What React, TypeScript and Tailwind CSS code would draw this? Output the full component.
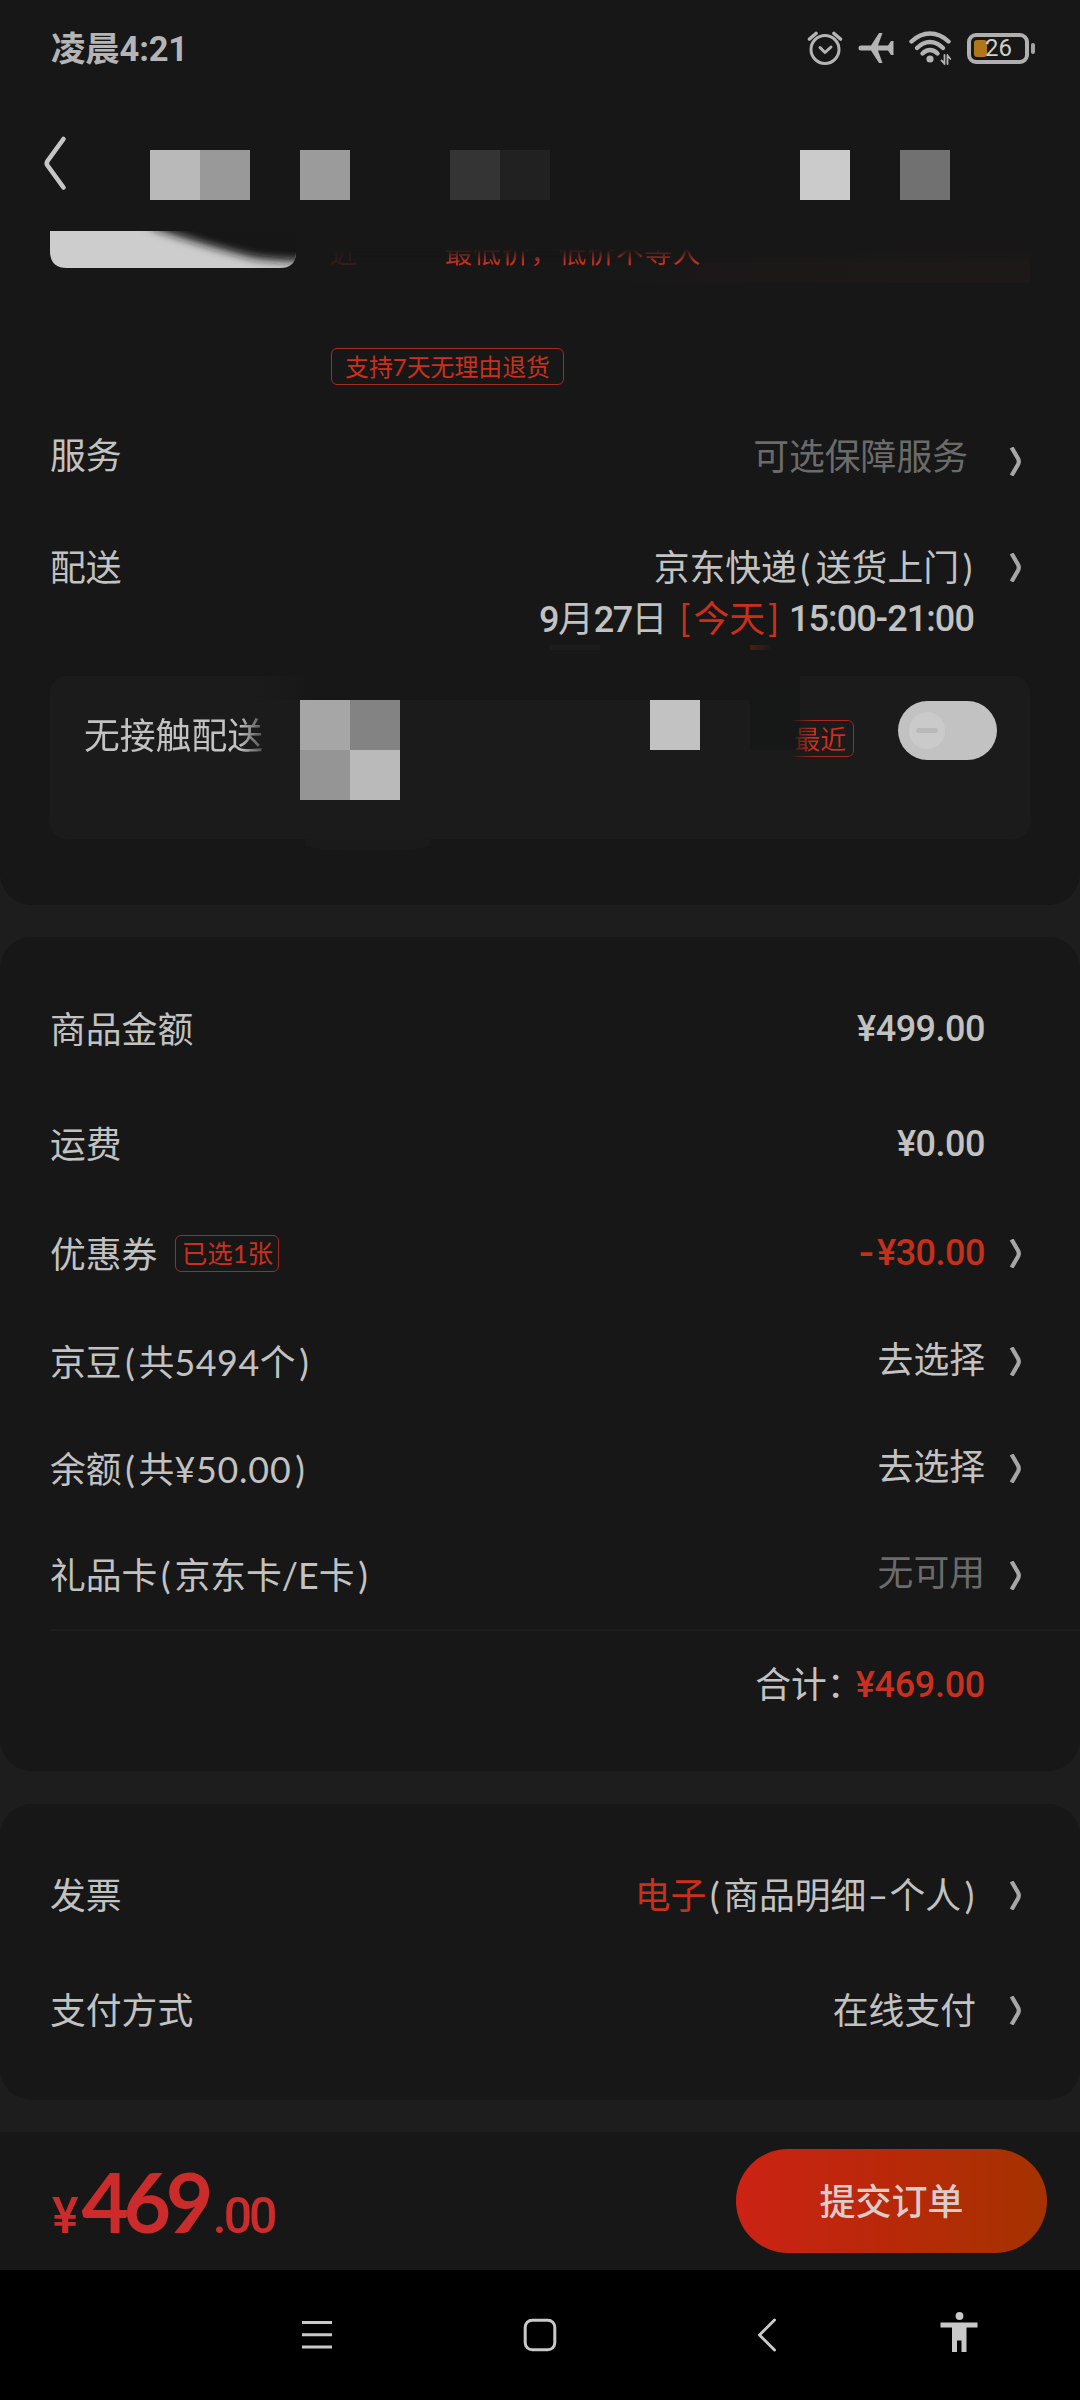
import clsx from "clsx";
import type { ReactNode } from "react";

const Chevron = ({ className }: { className?: string }) => (
  <svg
    viewBox="0 0 13 29"
    className={clsx("h-[29px] w-[13px] shrink-0 text-[#a6a6a6]", className)}
    fill="none"
    stroke="currentColor"
    strokeWidth="4.2"
    strokeLinejoin="round"
  >
    <path d="M2.600 .5L9 11.500Q10.600 14.500 9 17.500L2.600 28.500" />
  </svg>
);

const Tag = ({ children, className }: { children: ReactNode; className?: string }) => (
  <span
    className={clsx(
      "flex h-[37px] items-center justify-center rounded-md border-[1.5px] border-[#a52a1f] whitespace-nowrap text-[#cb2f1d]",
      className
    )}
  >
    {children}
  </span>
);

const Price = ({ children, className = "tracking-[-0.5px]" }: { children: ReactNode; className?: string }) => (
  <span className={clsx("font-[Roboto,'Noto_Sans_CJK_SC',sans-serif] text-[36px] font-medium", className)}>
    {children}
  </span>
);

// brackets and dashes sit in a wider cell than the font gives them
const Wide = ({ children, className = "w-[17px]" }: { children: ReactNode; className?: string }) => (
  <span className={clsx("inline-block text-center", className)}>{children}</span>
);

type RowProps = {
  label: ReactNode;
  value: ReactNode;
  height: string;
  arrow?: boolean;
  arrowGap?: string;
  valueClass?: string;
  arrowClass?: string;
};

const Row = ({ label, value, height, arrow = true, arrowGap = "w-[24px]", valueClass, arrowClass }: RowProps) => (
  <div className={clsx("flex items-center pr-[58px] pl-[50px]", height)}>
    <div className="flex items-center pt-[2px]">{label}</div>
    <div className={clsx("ml-auto flex items-center", valueClass)}>{value}</div>
    <div className={clsx("shrink-0", arrowGap)} />
    {arrow ? <Chevron className={arrowClass} /> : <div className="w-[13px]" />}
  </div>
);

const StatusBar = () => (
  <div className="flex h-[96px] items-center pr-[45px] pl-[51px] text-[#b4b4b4]">
    <span className="pt-[2px] font-[Roboto,'Noto_Sans_CJK_SC',sans-serif] text-[34.500px] font-bold tracking-[-0.2px]">
      凌晨4:21
    </span>
    <div className="ml-auto flex items-center">
      {/* alarm */}
      <svg viewBox="0 0 36 36" className="h-9 w-9" fill="none" stroke="currentColor" strokeLinecap="round">
        <circle cx="18" cy="19.5" r="14" strokeWidth="3" />
        <path d="M13 17.5l5 5 6-5.5" strokeWidth="3" strokeLinejoin="round" />
        <path d="M2.5 9L9 3.5M33.5 9L27 3.5" strokeWidth="3.6" />
      </svg>
      {/* airplane mode */}
      <svg viewBox="0 0 36 32" className="ml-[15px] h-8 w-9" fill="currentColor">
        <path d="M3 13.5H13L21 1h3.5L20 13.5h10L33 9h2.500v14H33l-3-4.500H20L24.500 31H21L13 18.500H3Q.5 18.500.5 16T3 13.500z" />
      </svg>
      {/* wifi with data arrows */}
      <svg viewBox="0 0 42 34" className="ml-[15px] h-[34px] w-[42px]" fill="none" stroke="currentColor" strokeLinecap="round">
        <path d="M2.500 10.500Q11 2.500 21 2.500T39.500 10.500" strokeWidth="4.4" />
        <path d="M8 17Q14 11 21 11T34 17" strokeWidth="4.4" />
        <path d="M13.500 22.500Q17 19 21 19T28.500 22.500" strokeWidth="4.4" />
        <circle cx="21" cy="28" r="3.6" fill="currentColor" stroke="none" />
        <path d="M35.500 24v9M32.500 29.500l3 3M38.500 33v-9M38.500 24.500l3 3.500" strokeWidth="1.8" />
      </svg>
      {/* battery */}
      <div className="ml-[16px] flex items-center">
        <div className="relative flex h-[31px] w-[62px] items-center rounded-[9px] border-4 border-[#b0b0b0] pl-[3px]">
          <div className="h-[17px] w-[13px] rounded-[3px] bg-[#b0761a]" />
          <span className="absolute left-[14px] font-[Roboto] text-[24px] leading-none text-[#cfcfcf]">26</span>
        </div>
        <div className="ml-[2px] h-[11px] w-1 rounded-full bg-[#a4a4a4]" />
      </div>
    </div>
  </div>
);

const Header = () => (
  <div className="flex h-[135px] items-start pl-[43px]">
    <svg viewBox="0 0 24 56" className="mt-[39px] h-14 w-6 text-[#c6c6c6]" fill="none" stroke="currentColor" strokeWidth="4.6" strokeLinecap="round" strokeLinejoin="round">
      <path d="M20.500 4L4.500 26Q3 28 4.500 30.500L20.500 52.500" />
    </svg>
    <div className="mt-[54px] ml-[83px] flex h-[50px]">
      <div className="w-[50px] bg-[#b9b9b9]" />
      <div className="w-[50px] bg-[#999999]" />
      <div className="ml-[50px] w-[50px] bg-[#9b9b9b]" />
      <div className="ml-[100px] w-[50px] bg-[#343434]" />
      <div className="w-[50px] bg-[#212121]" />
      <div className="ml-[250px] w-[50px] bg-[#cbcbcb]" />
      <div className="ml-[50px] w-[50px] bg-[#717171]" />
    </div>
  </div>
);

// bottom edge of the product card, scrolled under the header
const ProductStrip = () => (
  <div className="flex h-[117px] items-start pl-[50px]">
    <svg viewBox="0 0 246 37" className="h-[37px] w-[246px] shrink-0">
      <defs>
        <clipPath id="thumb">
          <path d="M0 0H246V21Q246 37 230 37H17Q0 37 0 20z" />
        </clipPath>
        <filter id="soft" x="-20%" y="-60%" width="140%" height="220%">
          <feGaussianBlur stdDeviation="5" />
        </filter>
      </defs>
      <g clipPath="url(#thumb)">
        <rect width="246" height="37" fill="#cdcdcd" />
        <path d="M80 -20L106 -2Q150 13 200 26Q225 31 270 30V-20z" fill="#171717" filter="url(#soft)" />
      </g>
    </svg>
    <div className="mt-[5px] ml-[34px] flex h-[47px] w-[700px] items-start bg-linear-to-r from-[#171717] from-30% to-[#1e1918] pt-[3px] [mask-image:linear-gradient(to_bottom,transparent_13px,black_26px)]">
      <span className="w-[115px] text-[27.600px] text-[#c3301f] opacity-20">近</span>
      <span className="text-[27.600px] tracking-[0.9px] whitespace-nowrap text-[#c3301f]">最低价，低价不等人</span>
    </div>
  </div>
);

const ContactlessCard = () => (
  <div className="relative mx-[50px] flex h-[163px] items-start rounded-2xl bg-[#1b1b1b]">
    <div className="absolute top-0 left-[205px] h-[24px] w-[545px] bg-linear-to-r from-transparent via-[#171717] via-10% to-[#171717]" />
    <div className="absolute top-[163px] left-[255px] h-[12px] w-[125px] rounded-b-[50%] bg-[#1a1a1a]" />
    <span className="mt-[42px] ml-[34px] w-[216px] leading-none whitespace-nowrap [mask-image:linear-gradient(to_right,black_155px,transparent_190px)]">
      无接触配送
    </span>
    <div className="mt-[24px] grid h-[100px] w-[100px] grid-cols-2">
      <div className="bg-[#a6a6a6]" />
      <div className="bg-[#838383]" />
      <div className="bg-[#959595]" />
      <div className="bg-[#bababa]" />
    </div>
    <div className="mt-[24px] ml-[250px] h-[50px] w-[50px] bg-[#c2c2c2]" />
    <div className="mt-[24px] ml-[50px] h-[50px] w-[50px] bg-[#161818]" />
    <Tag className="mt-[44px] -ml-[13px] w-[67px] text-[26px] [mask-image:linear-gradient(to_right,transparent_3px,black_26px)]">最近</Tag>
    <div className="mt-[25px] ml-[44px] flex h-[59px] w-[99px] items-center rounded-full bg-[#c2c2c2] pl-[11px]">
      <div className="flex h-[37px] w-[36px] items-center justify-center rounded-full bg-[#cacaca]">
        <div className="h-[5px] w-[22px] rounded-full bg-[#b9b9b9]" />
      </div>
    </div>
  </div>
);

const paymentRows: RowProps[] = [
  { label: "商品金额", value: <Price>¥499.00</Price>, height: "h-[116px]", arrow: false },
  { label: "运费", value: <Price>¥0.00</Price>, height: "h-[114px]", arrow: false },
  {
    label: (
      <>
        优惠券<Tag className="-mt-[2px] ml-[18px] w-[104px] text-[25.500px]">已选1张</Tag>
      </>
    ),
    value: (
      <span className="text-[#c62f1a]">
        <Wide className="mr-[2px] w-[17px] scale-x-125 font-bold">-</Wide>
        <Price>¥30.00</Price>
      </span>
    ),
    height: "h-[106px]",
    valueClass: "pb-[3px]",
    arrowClass: "-mt-[1px]",
  },
  {
    label: (
      <span className="-mt-[1px]">
        京豆<Wide>(</Wide>共<span className="tracking-[0.6px]">5494</span>个<Wide>)</Wide>
      </span>
    ),
    value: "去选择",
    height: "h-[110px]",
    valueClass: "pb-[5px]",
    arrowClass: "-mt-[2px]",
  },
  {
    label: (
      <span className="-mt-[1px]">
        余额<Wide>(</Wide>共<span className="tracking-[0.8px]">¥50.00</span>
        <Wide>)</Wide>
      </span>
    ),
    value: "去选择",
    height: "h-[104px]",
    valueClass: "pb-[5px]",
    arrowClass: "-mt-[2px]",
  },
  {
    label: (
      <span>
        礼品卡<Wide>(</Wide>京东卡/E卡<Wide>)</Wide>
      </span>
    ),
    value: <span className="text-[#6b6b6b]">无可用</span>,
    height: "h-[108px]",
    valueClass: "pb-[4px]",
  },
];

const SubmitBar = () => (
  <div className="flex h-[138px] items-center bg-[#171717] pr-[33px] pl-[52px]">
    <div className="flex items-baseline font-[Roboto] text-[#cb2b2b]">
      <span className="text-[50px] leading-none font-medium">¥</span>
      <span className="ml-[3px] font-[Lato] text-[82px] leading-none font-bold tracking-[-5.5px]">469</span>
      <span className="ml-[5px] text-[50px] leading-none font-medium tracking-[-3px]">.00</span>
    </div>
    <button className="ml-auto h-[104px] w-[311px] rounded-full bg-linear-to-r from-[#cc2214] via-[#b82808] to-[#a53200] text-[36px] font-medium text-[#dccbc8]">
      提交订单
    </button>
  </div>
);

const NavBar = () => (
  <div className="flex h-[130px] items-center bg-black pl-[301px] text-[#c9c9c9]">
    <svg viewBox="0 0 32 32" className="h-8 w-8" stroke="currentColor" strokeWidth="3">
      <path d="M1 3.500H31M1 15.700H31M1 28H31" />
    </svg>
    <svg viewBox="0 0 34 34" className="ml-[190px] h-[34px] w-[34px]" fill="none" stroke="currentColor" strokeWidth="3">
      <rect x="2.2" y="2.2" width="29.6" height="29.6" rx="7" />
    </svg>
    <svg viewBox="0 0 20 34" className="ml-[200px] h-[34px] w-5" fill="none" stroke="currentColor" strokeWidth="3" strokeLinecap="round" strokeLinejoin="round">
      <path d="M17.500 2L2.500 17L17.500 32" />
    </svg>
    <svg viewBox="0 0 38 40" className="-mt-[6px] ml-[163px] h-10 w-[38px]" fill="currentColor">
      <circle cx="19.5" cy="4" r="3.9" />
      <path d="M.5 10.500H37.500V15.500H26.500V40H21.500V28.500H17V40H12V15.500H.5z" />
    </svg>
  </div>
);

export default function App() {
  return (
    <div className="flex h-[2400px] w-[1080px] flex-col overflow-hidden bg-[#1d1d1d] font-[Lato,'Noto_Sans_CJK_SC',sans-serif] text-[35.800px] leading-none text-[#c2c2c2]">
      <section className="h-[905px] rounded-b-[32px] bg-[#171717]">
        <StatusBar />
        <Header />
        <ProductStrip />
        <div className="flex h-[51px] items-start pl-[331px]">
          <Tag className="w-[233px] text-[23.900px]">支持7天无理由退货</Tag>
        </div>
        <Row
          label="服务"
          value={<span className="text-[#6b6b6b]">可选保障服务</span>}
          height="h-[112px]"
          arrowGap="w-[41px]"
          valueClass="pt-[3px]"
          arrowClass="mt-[12px]"
        />
        <Row
          label="配送"
          value={
            <span>
              京东快递<Wide className="mr-[2px] w-[17px]">(</Wide>送货上门<Wide>)</Wide>
            </span>
          }
          height="h-[112px]"
          arrowGap="w-[33px]"
          valueClass="pt-[1px]"
        />
        <div className="-mt-[26px] flex h-[44px] items-center justify-end pr-[106px]">
          <span>
            <Price className="tracking-[-1.5px]">9</Price>月<Price className="tracking-[-1.5px]">27</Price>日
          </span>
          <span className="mr-[7px] ml-[9px] text-[#cb2f1a]">
            <Wide>[</Wide>今天<Wide>]</Wide>
          </span>
          <Price className="tracking-[-0.9px]">15:00-21:00</Price>
        </div>
        <div className="flex h-[35px] pt-[4px] pl-[550px]">
          <div className="h-[5px] w-[50px] bg-[#1c1c1c]" />
          <div className="ml-[150px] h-[5px] w-[22px] bg-linear-to-r from-[#4e1c12] to-[#171717]" />
        </div>
        <ContactlessCard />
      </section>

      <section className="mt-8 h-[834px] rounded-[32px] bg-[#171717] pt-[34px]">
        {paymentRows.map((row, i) => (
          <Row key={i} {...row} />
        ))}
        <div className="ml-[50px] h-[2px] bg-[#1c1c1c]" />
        <div className="flex h-[106px] items-center justify-end pt-[1px] pr-[95px]">
          合计：<Price className="-ml-[7px] tracking-[-0.3px] text-[#cb2f1f]">¥469.00</Price>
        </div>
      </section>

      <section className="mt-[33px] h-[296px] rounded-[32px] bg-[#171717] pt-[33px]">
        <Row
          label="发票"
          value={
            <span>
              <span className="text-[#cb2f1a]">电子</span>
              <Wide>(</Wide>商品明细<Wide className="w-[23px]">–</Wide>个人<Wide>)</Wide>
            </span>
          }
          height="h-[116px]"
          arrowGap="w-[31px]"
          valueClass="pt-[1px]"
        />
        <Row label="支付方式" value="在线支付" height="h-[114px]" arrowGap="w-[33px]" valueClass="pt-[1px]" />
      </section>

      <div className="mt-8">
        <SubmitBar />
        <NavBar />
      </div>
    </div>
  );
}
